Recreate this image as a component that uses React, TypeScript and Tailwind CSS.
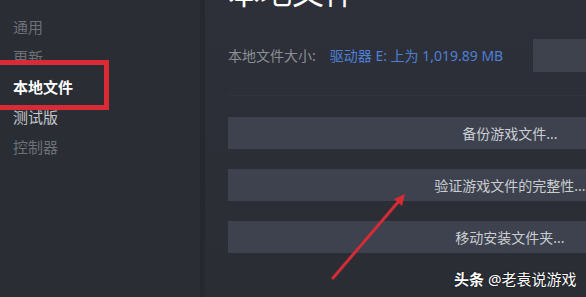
import React from "react";

const cjk = { fontFamily: '"Noto Sans", "Noto Sans CJK SC", sans-serif' };

export default function App() {
  const side = [
    { t: "通用", c: "text-[#6c7077]" },
    { t: "更新", c: "text-[#6c7077]" },
    { t: "本地文件", c: "text-white font-bold" },
    { t: "测试版", c: "text-[#c4c7cb]" },
    { t: "控制器", c: "text-[#6c7077]" },
  ];
  const buttons = ["备份游戏文件...", "验证游戏文件的完整性...", "移动安装文件夹..."];
  return (
    <div className="relative flex h-[297px] w-[586px] overflow-hidden bg-[#2a2d34]" style={cjk}>
      {/* sidebar */}
      <div className="flex w-[200px] shrink-0 flex-col pl-[13px] pt-[12px]">
        {side.map((s) => (
          <div key={s.t} className={`text-[15px] leading-[30px] ${s.c}`}>
            {s.t}
          </div>
        ))}
      </div>
      {/* content */}
      <div className="flex flex-1 overflow-hidden border-l-[5px] border-[#25282e] bg-gradient-to-b from-[#2d3038] to-[#2a2d34]">
        <div className="flex w-full flex-col pl-[23px]">
          <div className="mt-[-24px] h-[32px] whitespace-nowrap text-[32px] leading-[32px] text-white">本地文件</div>
          <div className="mt-[31px] flex h-[33px] items-center whitespace-nowrap">
            <span className="text-[14px] text-[#8a8e95]">本地文件大小:</span>
            <span className="ml-[14px] text-[14px] text-[#4d7fd6]">驱动器 E: 上为 1,019.89 MB</span>
            <div className="ml-auto h-[33px] w-[54px] shrink-0 border-l border-[#2a2e36] bg-[#3d424d]" />
          </div>
          <div className="mt-[23px] h-px w-full bg-[#30343c]" />
          <div className="mt-[21px] flex flex-col gap-[20px]">
            {buttons.map((b) => (
              <div
                key={b}
                className="flex h-[32px] w-[564px] shrink-0 items-center justify-center whitespace-nowrap bg-[#3d424e] text-[14px] text-[#c9ccd0]"
              >
                {b}
              </div>
            ))}
          </div>
        </div>
      </div>

      {/* red highlight box */}
      <div className="pointer-events-none absolute left-[-6px] top-[60px] h-[50px] w-[115px] border-[5px] border-[#d92a35]" />

      {/* red arrow */}
      <svg className="pointer-events-none absolute left-0 top-0" width="586" height="297" viewBox="0 0 586 297">
        <line x1="333" y1="278" x2="399" y2="201" stroke="#d42b35" strokeWidth="3" strokeLinecap="round" />
        <polygon points="405,194 394,199 402,206" fill="#d42b35" />
      </svg>

      {/* watermark */}
      <div
        className="absolute left-[454px] top-[269px] whitespace-nowrap text-[15px] leading-[20px] text-white"
        style={{ textShadow: "0 0 2px rgba(0,0,0,0.8)" }}
      >
        <span className="font-bold">头条</span> @老袁说游戏
      </div>
    </div>
  );
}
